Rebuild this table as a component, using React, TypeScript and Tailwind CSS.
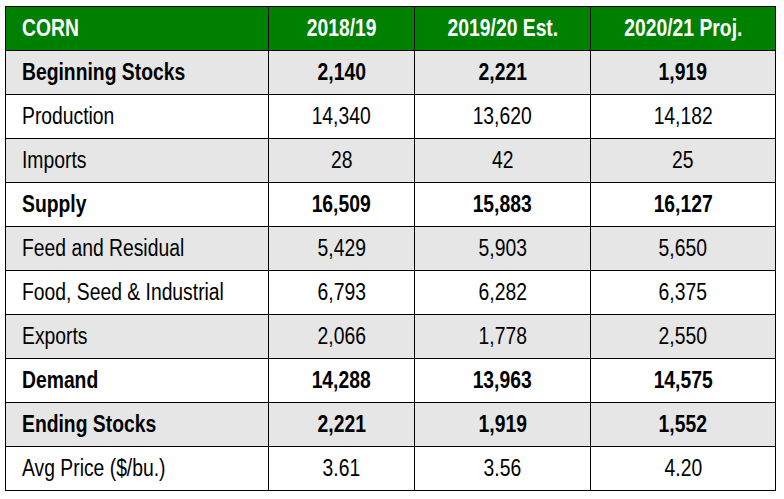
const header = ['CORN', '2018/19', '2019/20 Est.', '2020/21 Proj.'];

type Row = { label: string; values: string[]; bold?: boolean };

const rows: Row[] = [
  { label: 'Beginning Stocks', values: ['2,140', '2,221', '1,919'], bold: true },
  { label: 'Production', values: ['14,340', '13,620', '14,182'] },
  { label: 'Imports', values: ['28', '42', '25'] },
  { label: 'Supply', values: ['16,509', '15,883', '16,127'], bold: true },
  { label: 'Feed and Residual', values: ['5,429', '5,903', '5,650'] },
  { label: 'Food, Seed & Industrial', values: ['6,793', '6,282', '6,375'] },
  { label: 'Exports', values: ['2,066', '1,778', '2,550'] },
  { label: 'Demand', values: ['14,288', '13,963', '14,575'], bold: true },
  { label: 'Ending Stocks', values: ['2,221', '1,919', '1,552'], bold: true },
  { label: 'Avg Price ($/bu.)', values: ['3.61', '3.56', '4.20'] },
];

const cell = 'h-[44px] flex items-center border-r border-b border-black';

const App = () => {
  return (
    <div className="w-[784px] h-[499px] bg-white pt-[6px] pl-[5px] font-['Liberation_Sans',Arial,sans-serif] text-[23px] text-black">
      <div className="grid grid-cols-[263px_146px_176px_185px] w-fit border-l border-t border-black">
        {header.map((h, i) => (
          <div
            key={h}
            className={`${cell} bg-[#008000] text-white font-bold ${i === 0 ? 'justify-start pl-[16px]' : 'justify-center'}`}
          >
            <span className={`inline-block scale-x-[0.84] ${i === 0 ? 'origin-left' : 'origin-center'}`}>{h}</span>
          </div>
        ))}
        {rows.map((r, ri) => {
          const bg = ri % 2 === 0 ? 'bg-[#e6e6e6]' : 'bg-white';
          const weight = r.bold ? 'font-bold' : 'font-normal';
          return [
            <div key={r.label} className={`${cell} ${bg} ${weight} justify-start pl-[16px]`}>
              <span className="inline-block scale-x-[0.84] origin-left whitespace-nowrap">{r.label}</span>
            </div>,
            ...r.values.map((v, vi) => (
              <div key={r.label + vi} className={`${cell} ${bg} ${weight} justify-center`}>
                <span className="inline-block scale-x-[0.84] origin-center">{v}</span>
              </div>
            )),
          ];
        })}
      </div>
    </div>
  );
};

export default App;
